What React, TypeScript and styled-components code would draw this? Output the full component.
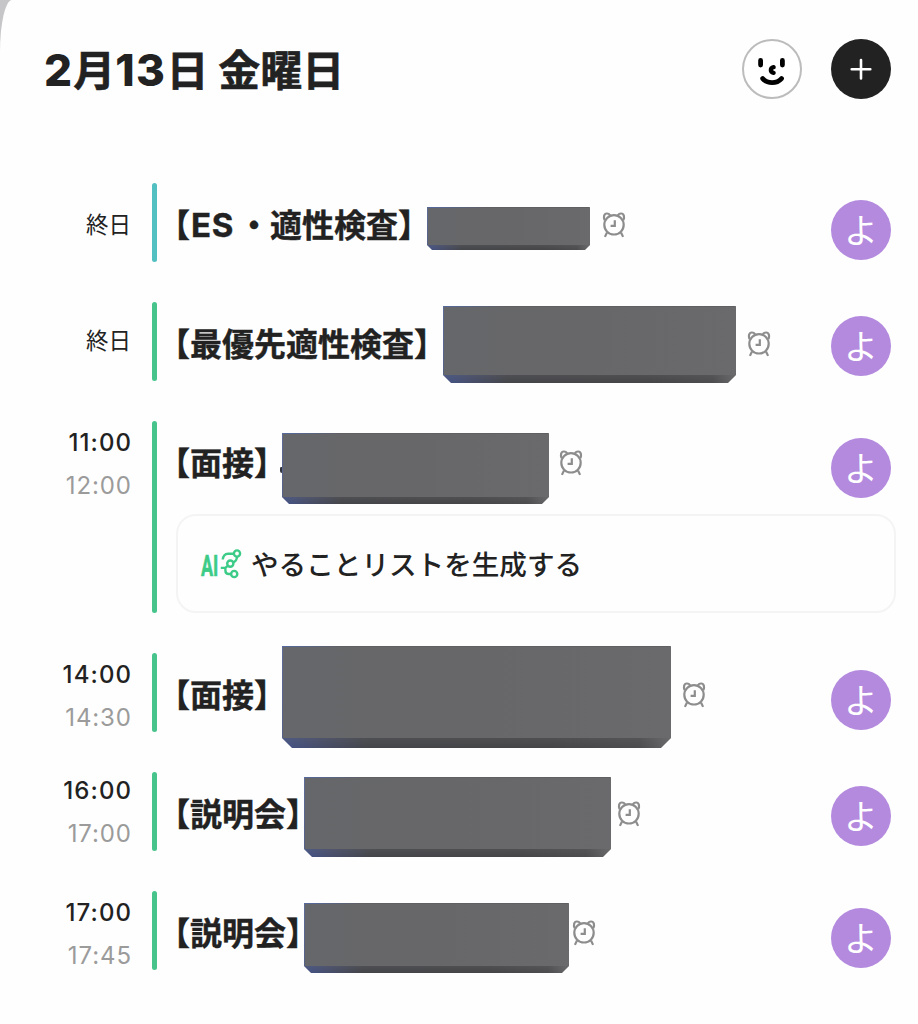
import React from "react";
import styled, { createGlobalStyle, css } from "styled-components";

const GlobalStyle = createGlobalStyle`
  * { box-sizing: border-box; }
  html, body { margin: 0; padding: 0; }
  body {
    background: #c6c6c8;
    font-family: Inter, "Noto Sans CJK JP", sans-serif;
    color: #222;
  }
`;

const Sheet = styled.main`
  width: 918px;
  height: 1024px;
  overflow: hidden;
  background: #fefefe;
  border-top-left-radius: 12px 52px;
`;

const Header = styled.header`
  display: flex;
  align-items: center;
  height: 138px;
  padding: 0 27px 0 44px;
`;

const DateTitle = styled.h1`
  flex: 1;
  margin: 3px 0 0;
  font-size: 42px;
  line-height: 60px;
  font-weight: 700;
  white-space: nowrap;
  -webkit-text-stroke: 0.6px #222;
`;

const Numeral = styled.span<{ $spacing: number }>`
  font-size: 44px;
  line-height: 1;
  font-weight: 800;
  -webkit-text-stroke: 0;
  letter-spacing: ${(p) => p.$spacing}px;
`;

const RoundButton = styled.button<{ $dark?: boolean }>`
  display: grid;
  place-items: center;
  width: 60px;
  height: 60px;
  margin: 0 0 0 29px;
  padding: 0;
  border-radius: 50%;
  border: ${(p) => (p.$dark ? "0" : "2px solid #bcbcbc")};
  background: ${(p) => (p.$dark ? "#222" : "#fff")};
`;

const List = styled.ul`
  display: flex;
  flex-direction: column;
  gap: 40px;
  margin: 0;
  padding: 45px 22px 0 0;
  list-style: none;
`;

const Item = styled.li<{ $bar: string }>`
  display: grid;
  grid-template-columns: 131px 5px 720px;
  column-gap: 20px;
  align-items: stretch;
  &::before {
    content: "";
    grid-column: 2;
    grid-row: 1;
    margin: 0 -1px 0 1px;
    border-radius: 2.5px;
    background: ${(p) => p.$bar};
  }
`;

const Times = styled.div<{ $shift: number }>`
  grid-column: 1;
  grid-row: 1;
  display: flex;
  flex-direction: column;
  align-items: flex-end;
  height: 79px;
  padding-top: ${(p) => 7 - p.$shift}px;
  white-space: nowrap;
`;

const Time = styled.time<{ $muted?: boolean }>`
  font-size: 24px;
  line-height: 30px;
  letter-spacing: ${(p) => (p.$muted ? 0.9 : 1.1)}px;
  margin-right: ${(p) => (p.$muted ? -0.9 : -1.1)}px;
  margin-bottom: 13px;
  font-weight: ${(p) => (p.$muted ? 400 : 500)};
  color: ${(p) => (p.$muted ? "#9b9b9b" : "#222")};
`;

const AllDay = styled.span`
  margin-top: 19px;
  font-size: 22.5px;
  line-height: 32px;
`;

const Content = styled.div`
  grid-column: 3;
  grid-row: 1;
`;

const Line = styled.div`
  display: flex;
  align-items: flex-start;
  height: 79px;
  padding-right: 5px;
`;

const Title = styled.h2<{ $width: number }>`
  flex: none;
  width: ${(p) => p.$width + 18}px;
  margin: 19px 0 0 -18px;
  font-size: 32px;
  line-height: 48px;
  font-weight: 700;
  white-space: nowrap;
  -webkit-text-stroke: 0.4px #222;
`;

const Latin = styled.span`
  margin: 0 4px 0 1px;
  font-size: 33px;
  line-height: 1;
  letter-spacing: 0.6px;
`;

const Peek = styled.i`
  flex: none;
  width: 2px;
  height: 6px;
  margin: 46px 0 0 -2px;
  border-radius: 2px 0 0 3px;
  background: #33363f;
`;

const Block = styled.div<{ $w: number; $h: number; $top: number; $bevel: number }>`
  flex: none;
  width: ${(p) => p.$w}px;
  height: ${(p) => p.$h}px;
  margin-top: ${(p) => p.$top}px;
  ${({ $bevel: b }) => css`
    clip-path: polygon(
      0 1px, 1px 0, calc(100% - 1px) 0, 100% 1px,
      100% calc(100% - ${b}px), calc(100% - ${b}px) 100%,
      ${b}px 100%, 0 calc(100% - ${b}px)
    );
    background:
      linear-gradient(90deg, #53689f, rgba(83, 104, 159, 0)) 0 0 / 60px 1px no-repeat,
      linear-gradient(#5e6c98, #566188) 0 0 / 1px calc(100% - ${b}px) no-repeat,
      linear-gradient(#606062, #606062) 0 0 / 100% 1px no-repeat,
      linear-gradient(90deg, #66676a, #676769 50%, #6a6a6c) 0 0 / 100% calc(100% - ${b}px) no-repeat,
      linear-gradient(rgba(110, 110, 112, 0.25), rgba(110, 110, 112, 0)) 0 100% / 100% ${b}px no-repeat,
      linear-gradient(90deg, #435389 0, #464d6c 9%, #444549 22%, #454547 70%, #4c4c4e 92%, #68686a 100%);
  `}
`;

const AlarmSvg = styled.svg<{ $gap: number }>`
  flex: none;
  width: 24px;
  height: 26px;
  margin: 29px 0 0 ${(p) => p.$gap}px;
`;

const Avatar = styled.div<{ $shift: number }>`
  flex: none;
  display: grid;
  place-items: center;
  width: 60px;
  height: 60px;
  margin: ${(p) => 17 - p.$shift}px 0 0 auto;
  padding-top: 2px;
  border-radius: 50%;
  background: #b48ade;
  color: #fff;
  font-size: 34px;
  line-height: 58px;
`;

const TodoCard = styled.button`
  display: flex;
  align-items: center;
  gap: 9px;
  width: 720px;
  height: 99px;
  margin: 14px 0 0;
  padding: 1px 0 0 23px;
  border: 2px solid #f4f4f4;
  border-radius: 20px;
  background: #fefefe;
  font: 500 27.6px/40px Inter, "Noto Sans CJK JP", sans-serif;
  color: #222;
`;

const TodoLabel = styled.span`
  padding-top: 2px;
`;

const AiSvg = styled.svg`
  flex: none;
  overflow: visible;
`;

const Face = () => (
  <svg width="56" height="56" viewBox="0 0 56 56" fill="none" stroke="#000" strokeLinecap="round">
    <path d="M16.600 19.500v4.600M38.400 19.500v4.600" strokeWidth="4.800" />
    <path d="M29.600 26.200c-3.600.8-3.600 4.800 0 5.600" strokeWidth="4.400" />
    <path d="M18.700 37.600c4.900 5.400 13.900 5.400 18.800 0" strokeWidth="4.800" />
  </svg>
);

const Plus = () => (
  <svg width="60" height="60" viewBox="0 0 60 60" stroke="#fff" strokeWidth="2.600" strokeLinecap="round">
    <path d="M30 21v18.500M20.700 30.200h18.600" />
  </svg>
);

const Alarm = ({ gap }: { gap: number }) => (
  <AlarmSvg $gap={gap} viewBox="0 0 24 26" fill="none" stroke="#8d8d8d" strokeWidth="2.200">
    <circle cx="12" cy="12.800" r="9.700" />
    <path d="M2.600 8.200C1.300 5 2 1.500 4.800 1.500c1.600 0 2.900.8 3.400 2.200M21.400 8.200c1.300-3.200.6-6.700-2.200-6.700-1.600 0-2.900.8-3.400 2.200M5 20.500 2.900 24.900M19 20.500l2.100 4.400" />
    <path d="M12.800 8.200v5.600H8.600" />
  </AlarmSvg>
);

const AiMark = () => (
  <AiSvg width="41" height="30" viewBox="0 0 41 30" fill="none" stroke="#3dcb88" strokeWidth="2.400">
    <text
      x="0"
      y="26.500"
      transform="scale(0.600 1)"
      fontFamily="Roboto, sans-serif"
      fontWeight="700"
      fontSize="30"
      fill="#3dcb88"
      strokeWidth="0.600"
    >
      AI
    </text>
    <circle cx="36" cy="4.500" r="3.100" />
    <circle cx="29.300" cy="14.600" r="3.100" />
    <circle cx="33.200" cy="25" r="3.100" />
    <path d="M21.800 10.500c.2-3.400 2.300-5.800 5.200-5.800h6M32.200 13.300c2.200-.6 3.600-2.200 3.800-5.500M19.800 18.900h4.400l2.600-2M24.400 18.900v2.600c0 2.300 1.300 3.500 3.400 3.500h2.400" />
  </AiSvg>
);

type Entry = {
  title: React.ReactNode;
  start?: string;
  end?: string;
  bar?: string;
  shift?: number;
  titleWidth: number;
  peek?: boolean;
  block: { w: number; h: number; top: number; bevel: number };
  alarmGap: number;
  todo?: string;
};

const entries: Entry[] = [
  { title: <>【<Latin>ES</Latin>・適性検査】</>, bar: "#52bfc1", titleWidth: 251, block: { w: 163, h: 43, top: 24, bevel: 5 }, alarmGap: 12 },
  { title: "【最優先適性検査】", shift: 3, titleWidth: 267, block: { w: 293, h: 77, top: 4, bevel: 8 }, alarmGap: 11 },
  { title: "【面接】", start: "11:00", end: "12:00", titleWidth: 106, peek: true, block: { w: 267, h: 71, top: 12, bevel: 7 }, alarmGap: 10, todo: "やることリストを生成する" },
  { title: "【面接】", start: "14:00", end: "14:30", titleWidth: 106, block: { w: 389, h: 102, top: -7, bevel: 10 }, alarmGap: 11 },
  { title: "【説明会】", start: "16:00", end: "17:00", shift: 3, titleWidth: 128, block: { w: 307, h: 80, top: 5, bevel: 8 }, alarmGap: 6 },
  { title: "【説明会】", start: "17:00", end: "17:45", titleWidth: 128, block: { w: 265, h: 70, top: 12, bevel: 7 }, alarmGap: 3 },
];

export default function App() {
  return (
    <>
      <GlobalStyle />
      <Sheet>
        <Header>
          <DateTitle>
            <Numeral $spacing={1.2}>2</Numeral>月<Numeral $spacing={1.4}>13</Numeral>日 金曜日
          </DateTitle>
          <RoundButton aria-label="プロフィール"><Face /></RoundButton>
          <RoundButton $dark aria-label="追加"><Plus /></RoundButton>
        </Header>
        <List>
          {entries.map((e, i) => (
            <Item key={i} $bar={e.bar ?? "#46c48b"}>
              <Times $shift={e.shift ?? 0}>
                {e.start ? (
                  <>
                    <Time>{e.start}</Time>
                    <Time $muted>{e.end}</Time>
                  </>
                ) : (
                  <AllDay>終日</AllDay>
                )}
              </Times>
              <Content>
                <Line>
                  <Title $width={e.titleWidth}>{e.title}</Title>
                  {e.peek && <Peek />}
                  <Block $w={e.block.w} $h={e.block.h} $top={e.block.top} $bevel={e.block.bevel} />
                  <Alarm gap={e.alarmGap} />
                  <Avatar $shift={e.shift ?? 0}>よ</Avatar>
                </Line>
                {e.todo && (
                  <TodoCard>
                    <AiMark />
                    <TodoLabel>{e.todo}</TodoLabel>
                  </TodoCard>
                )}
              </Content>
            </Item>
          ))}
        </List>
      </Sheet>
    </>
  );
}
